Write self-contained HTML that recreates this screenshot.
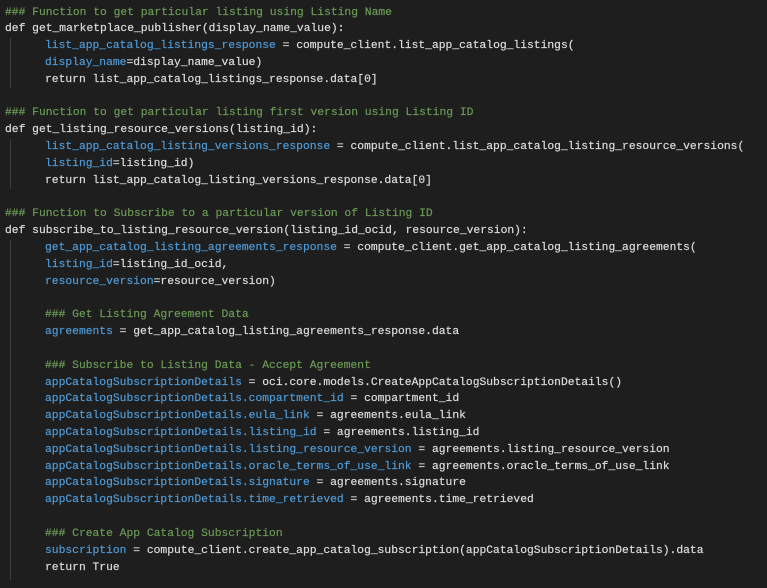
<!DOCTYPE html>
<html><head><meta charset="utf-8"><style>
html,body{margin:0;padding:0;background:#1e1e1e;width:767px;height:588px;overflow:hidden}
.c{position:relative;font-family:"Liberation Mono",monospace;font-size:11.32px;color:#dcdcdc;white-space:pre;-webkit-text-stroke:0.2px}
.l{position:absolute;left:5px;height:17px;line-height:17px}
.i{left:45px}
.g{color:#6a9955}
.b{color:#4f9ad6}
.v{position:absolute;left:10px;width:1px;background:#3c3c3c}
</style></head><body><div class="c">
<div class="v" style="top:38px;height:50px"></div>
<div class="v" style="top:139px;height:50px"></div>
<div class="v" style="top:240px;height:340px"></div>
<div class="l g" style="top:4.5px">### Function to get particular listing using Listing Name</div>
<div class="l" style="top:21.3px">def get_marketplace_publisher(display_name_value):</div>
<div class="l i" style="top:38.1px"><span class="b">list_app_catalog_listings_response</span> = compute_client.list_app_catalog_listings(</div>
<div class="l i" style="top:54.9px"><span class="b">display_name</span>=display_name_value)</div>
<div class="l i" style="top:71.8px">return list_app_catalog_listings_response.data[0]</div>
<div class="l g" style="top:105.4px">### Function to get particular listing first version using Listing ID</div>
<div class="l" style="top:122.2px">def get_listing_resource_versions(listing_id):</div>
<div class="l i" style="top:139px"><span class="b">list_app_catalog_listing_versions_response</span> = compute_client.list_app_catalog_listing_resource_versions(</div>
<div class="l i" style="top:155.8px"><span class="b">listing_id</span>=listing_id)</div>
<div class="l i" style="top:172.7px">return list_app_catalog_listing_versions_response.data[0]</div>
<div class="l g" style="top:206.3px">### Function to Subscribe to a particular version of Listing ID</div>
<div class="l" style="top:223.1px">def subscribe_to_listing_resource_version(listing_id_ocid, resource_version):</div>
<div class="l i" style="top:239.9px"><span class="b">get_app_catalog_listing_agreements_response</span> = compute_client.get_app_catalog_listing_agreements(</div>
<div class="l i" style="top:256.7px"><span class="b">listing_id</span>=listing_id_ocid,</div>
<div class="l i" style="top:273.6px"><span class="b">resource_version</span>=resource_version)</div>
<div class="l i g" style="top:307.2px">### Get Listing Agreement Data</div>
<div class="l i" style="top:324px"><span class="b">agreements</span> = get_app_catalog_listing_agreements_response.data</div>
<div class="l i g" style="top:357.6px">### Subscribe to Listing Data - Accept Agreement</div>
<div class="l i" style="top:374.5px"><span class="b">appCatalogSubscriptionDetails</span> = oci.core.models.CreateAppCatalogSubscriptionDetails()</div>
<div class="l i" style="top:391.3px"><span class="b">appCatalogSubscriptionDetails.compartment_id</span> = compartment_id</div>
<div class="l i" style="top:408.1px"><span class="b">appCatalogSubscriptionDetails.eula_link</span> = agreements.eula_link</div>
<div class="l i" style="top:424.9px"><span class="b">appCatalogSubscriptionDetails.listing_id</span> = agreements.listing_id</div>
<div class="l i" style="top:441.7px"><span class="b">appCatalogSubscriptionDetails.listing_resource_version</span> = agreements.listing_resource_version</div>
<div class="l i" style="top:458.6px"><span class="b">appCatalogSubscriptionDetails.oracle_terms_of_use_link</span> = agreements.oracle_terms_of_use_link</div>
<div class="l i" style="top:475.4px"><span class="b">appCatalogSubscriptionDetails.signature</span> = agreements.signature</div>
<div class="l i" style="top:492.2px"><span class="b">appCatalogSubscriptionDetails.time_retrieved</span> = agreements.time_retrieved</div>
<div class="l i g" style="top:525.8px">### Create App Catalog Subscription</div>
<div class="l i" style="top:542.6px"><span class="b">subscription</span> = compute_client.create_app_catalog_subscription(appCatalogSubscriptionDetails).data</div>
<div class="l i" style="top:559.5px">return True</div>
</div></body></html>
